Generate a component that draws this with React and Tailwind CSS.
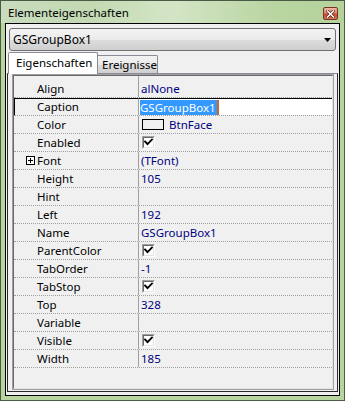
import React from "react";

function Check() {
  return (
    <div className="w-[13px] h-[13px] border border-t-[#a0a0a0] border-l-[#a0a0a0] border-b-white border-r-white">
      <div className="w-full h-full border border-t-[#696969] border-l-[#696969] border-b-[#e3e3e3] border-r-[#e3e3e3] bg-white flex items-center justify-center">
        <svg width="9" height="9" viewBox="0 0 9 9">
          <path d="M1 3.5 L3.5 6.2 L8 1.5" fill="none" stroke="#000" strokeWidth="1.9" strokeLinecap="square" />
        </svg>
      </div>
    </div>
  );
}

function PlusBox() {
  return (
    <div className="w-[9px] h-[9px] border border-black bg-white flex items-center justify-center">
      <svg width="7" height="7" viewBox="0 0 7 7">
        <path d="M1 3.5 H6 M3.5 1 V6" stroke="#000" strokeWidth="1" />
      </svg>
    </div>
  );
}

const rows = [
  { name: "Align", value: "alNone" },
  { name: "Caption", type: "edit", value: "GSGroupBox1" },
  { name: "Color", type: "color", value: "BtnFace" },
  { name: "Enabled", type: "check" },
  { name: "Font", value: "(TFont)", plus: true },
  { name: "Height", value: "105" },
  { name: "Hint", value: "" },
  { name: "Left", value: "192" },
  { name: "Name", value: "GSGroupBox1" },
  { name: "ParentColor", type: "check" },
  { name: "TabOrder", value: "-1" },
  { name: "TabStop", type: "check" },
  { name: "Top", value: "328" },
  { name: "Variable", value: "" },
  { name: "Visible", type: "check" },
  { name: "Width", value: "185" },
];

function Row({ r, first }) {
  const selected = r.type === "edit";
  return (
    <div className={first ? "flex h-[22px] border-b border-dotted border-[#a0a0a0]" : "flex h-[18px] border-b border-dotted border-[#a0a0a0]"}>
      <div
        className={
          (first ? "items-end " : "items-center ") +
          (r.plus
            ? "w-[124px] pl-[12px] flex text-black"
            : selected
            ? "w-[124px] pl-[22px] flex text-black border-l border-l-black border-t border-t-black"
            : "w-[124px] pl-[23px] flex text-black")
        }
      >
        {r.plus && (
          <div className="mr-[2px] flex items-center">
            <PlusBox />
          </div>
        )}
        <span className="leading-[16px]">{r.name}</span>
      </div>
      <div
        className={
          "flex-1 border-l border-l-[#a0a0a0] flex text-[#000080] " +
          (first
            ? "items-end pl-[2px]"
            : selected
            ? "items-stretch border-t border-t-black"
            : r.type === "check" || r.type === "color"
            ? "items-center pl-[3px]"
            : "items-center pl-[2px]")
        }
      >
        {r.type === "edit" ? (
          <div className="flex-1 bg-white flex items-center pl-[1px]">
            <span className="bg-[#3399ff] text-white leading-[15px] pr-[1px]">{r.value}</span>
            <span className="w-[2px] h-[15px] bg-[#d2691e]"></span>
          </div>
        ) : r.type === "check" ? (
          <Check />
        ) : r.type === "color" ? (
          <div className="flex items-center">
            <div className="w-[22px] h-[11px] border border-black bg-[#f0f0f0]"></div>
            <span className="ml-[5px] leading-[16px]">{r.value}</span>
          </div>
        ) : (
          <span className="leading-[16px]">{r.value}</span>
        )}
      </div>
    </div>
  );
}

export default function App() {
  return (
    <div className="w-[345px] h-[401px] border border-[#4a5a44] bg-[#b8d49f] flex flex-col font-['Noto_Sans',sans-serif] text-[11.5px] select-none overflow-hidden">
      {/* Title bar */}
      <div className="h-[22px] flex bg-[linear-gradient(90deg,#c9dcbf_0%,#c2d9b2_25%,#d3e5c6_50%,#b9d5a0_80%,#b5d29b_100%)]">
        <span className="pl-[7px] pt-[4px] leading-[16px] text-black">Elementeigenschaften</span>
        <div className="ml-auto mr-[6px] mt-[6px] w-[15px] h-[13px] rounded-[2px] border border-[#7a3324] bg-[linear-gradient(180deg,#efb8a4_0%,#de8a70_45%,#c8462a_55%,#d8765c_100%)] flex items-center justify-center">
          <svg width="9" height="8" viewBox="0 0 9 8">
            <path d="M1.5 1 L7.5 7 M7.5 1 L1.5 7" stroke="#5a2418" strokeWidth="3" strokeLinecap="square" />
            <path d="M1.5 1 L7.5 7 M7.5 1 L1.5 7" stroke="#fff" strokeWidth="1.5" strokeLinecap="square" />
          </svg>
        </div>
      </div>
      {/* Client area */}
      <div className="flex-1 mx-[4px] mb-[4px] border border-black bg-[#f0f0f0] flex flex-col px-[1px] pt-[4px] pb-[3px]">
        {/* Combobox */}
        <div className="mx-[2px] h-[23px] rounded-[3px] border border-[#707070] bg-[linear-gradient(180deg,#f3f3f3_0%,#ebebeb_50%,#dddddd_51%,#cfcfcf_100%)] flex items-center pl-[3px] pr-[4px]">
          <span className="leading-[16px] text-[12px] text-black">GSGroupBox1</span>
          <svg className="ml-auto" width="7" height="4" viewBox="0 0 7 4">
            <path d="M0 0 H7 L3.5 4 Z" fill="#000" />
          </svg>
        </div>
        {/* Tabs */}
        <div className="mt-[1px] h-[21px] flex items-end pl-[1px] relative z-10">
          <div className="h-[22px] -mb-[1px] w-[90px] bg-white border border-b-0 border-[#898c95] rounded-t-[2px] flex items-start pl-[7px] pt-[2px]">
            <span className="leading-[16px] text-black">Eigenschaften</span>
          </div>
          <div className="h-[18px] -ml-[1px] w-[61px] bg-[linear-gradient(180deg,#f2f2f2_0%,#ebebeb_50%,#dddddd_51%,#cfcfcf_100%)] border border-b-0 border-[#898c95] rounded-tr-[2px] flex items-center pl-[4px]">
            <span className="leading-[16px] text-black">Ereignisse</span>
          </div>
        </div>
        {/* Tab page */}
        <div className="flex-1 border border-[#2a2a2a] border-t-[#898c95] bg-[#f0f0f0] pl-[4px] pr-[3px] pb-[1px] flex flex-col">
          <div className="flex-1 border border-[#a0a0a0] flex flex-col">
            <div className="flex-1 border border-t-[#696969] border-l-[#696969] border-b-[#e3e3e3] border-r-[#e3e3e3] flex flex-col">
              {rows.map((r, i) => (
                <Row key={r.name} r={r} first={i === 0} />
              ))}
              <div className="flex-1"></div>
            </div>
          </div>
        </div>
      </div>
    </div>
  );
}
